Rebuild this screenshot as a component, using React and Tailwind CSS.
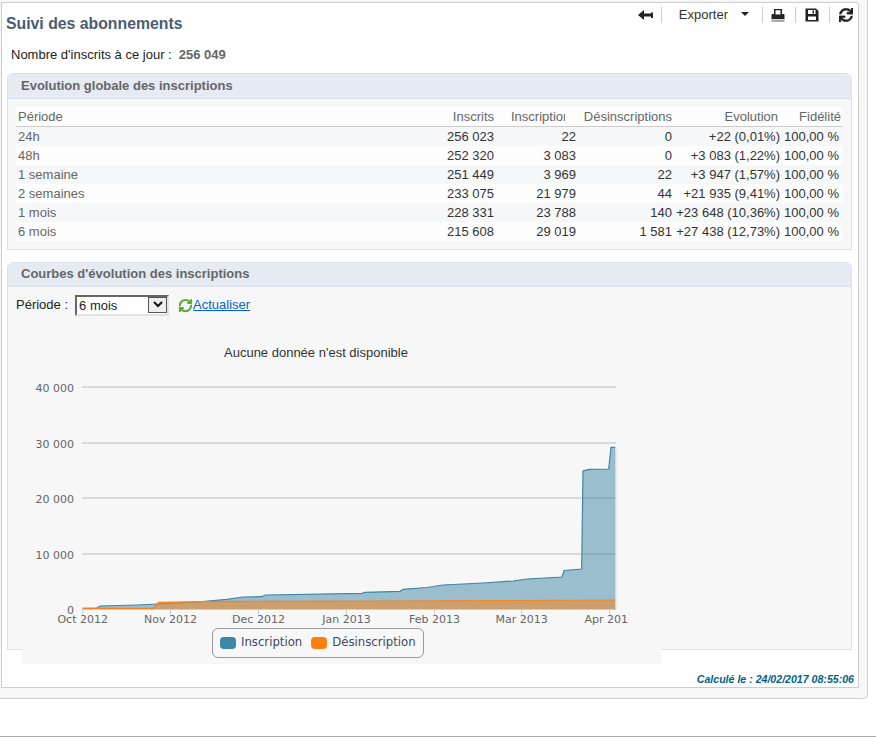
import React from "react";
import { FaSync } from "react-icons/fa";
import { RefreshCw } from "lucide-react";

const rows = [
  ["24h", "256 023", "22", "0", "+22 (0,01%)", "100,00 %"],
  ["48h", "252 320", "3 083", "0", "+3 083 (1,22%)", "100,00 %"],
  ["1 semaine", "251 449", "3 969", "22", "+3 947 (1,57%)", "100,00 %"],
  ["2 semaines", "233 075", "21 979", "44", "+21 935 (9,41%)", "100,00 %"],
  ["1 mois", "228 331", "23 788", "140", "+23 648 (10,36%)", "100,00 %"],
  ["6 mois", "215 608", "29 019", "1 581", "+27 438 (12,73%)", "100,00 %"],
];

const blue = [[82.7,608.3],[96.7,608.3],[100,606],[137,605],[158,604],[197,602],[227,599.3],[243,597],[262,596.7],[265,595],[362,593.3],[365,592.3],[400,591.3],[403,589.3],[427,587.5],[443,585],[483,583],[513,581],[527,579],[562,577],[564,570.5],[581.7,569],[583,471],[589,469.3],[608.7,469],[611,447.3],[615.3,447.3]];
const orange = [[82.7,608.3],[153,608.3],[156.7,605],[158.3,602.3],[200,601.7],[260,601.3],[400,601],[615.3,600]];
const pts = (a) => a.map((p) => p.join(",")).join(" ");
const area = (a) => `${a[0][0]},609 ${pts(a)} ${a[a.length - 1][0]},609`;

function Section({ title, className, headerClass, children }) {
  return (
    <section className={`ml-[5px] w-[845px] border border-[#d8e2ee] rounded-t-[6px] bg-[#f7f7f7] ${className}`}>
      <h2 className={`${headerClass} pl-[13px] flex items-center bg-[#e6eaf3] border-b border-[#d8e2ee] rounded-t-[6px] text-[13px] font-bold text-[#666]`}>
        {title}
      </h2>
      {children}
    </section>
  );
}

function Separator({ className }) {
  return <span className={`block w-px h-[16px] bg-[#ccc] ${className}`} />;
}

function Chart() {
  return (
    <div className="relative mt-[9px] ml-[6px] w-[639px] h-[340px] bg-[#f7f7f7]">
      <svg viewBox="22 324 639 340" width="639" height="340" className="block">
        {[387, 443, 498, 554].map((y) => (
          <line key={y} x1="82" x2="616" y1={y} y2={y} stroke="#cfcfcf" strokeWidth="1.5" />
        ))}
        <polygon points={area(blue)} fill="#3d85a4" fillOpacity="0.5" />
        <polyline points={pts(blue)} fill="none" stroke="#3d87a6" strokeWidth="1.2" />
        <polygon points={area(orange)} fill="#ff7f0e" fillOpacity="0.5" />
        <polyline points={pts(orange)} fill="none" stroke="#f58320" strokeWidth="1.2" />
        <line x1="82" x2="616" y1="609.5" y2="609.5" stroke="#c0d0e0" strokeWidth="1" />
        <line x1="615.8" x2="615.8" y1="447" y2="609" stroke="#c9d6e0" strokeWidth="1" />
        {[82.7, 170.5, 258.5, 346.5, 434.5, 521.6, 609.5].map((x) => (
          <line key={x} x1={x} x2={x} y1="609" y2="615" stroke="#c0d0e0" strokeWidth="1" />
        ))}
        <g style={{ fontFamily: '"DejaVu Sans", sans-serif', fontSize: "11px" }} fill="#666">
          {[["40 000", 392], ["30 000", 448], ["20 000", 503], ["10 000", 559], ["0", 614]].map(([t, y]) => (
            <text key={t} x="74" y={y} textAnchor="end">{t}</text>
          ))}
          {[["Oct 2012", 82.7], ["Nov 2012", 170.5], ["Dec 2012", 258.5], ["Jan 2013", 346.5], ["Feb 2013", 434.5], ["Mar 2013", 521.6]].map(([t, x]) => (
            <text key={t} x={x} y="623" textAnchor="middle">{t}</text>
          ))}
          <text x="584.5" y="623">Apr 201</text>
        </g>
        <text x="224" y="357" fill="#333" style={{ fontFamily: '"Liberation Sans", sans-serif', fontSize: "13px" }}>
          Aucune donnée n'est disponible
        </text>
      </svg>
      <div className="absolute left-[190px] top-[304px] w-[212px] h-[30px] border border-[#999] rounded-[6px] bg-[#f7f7f7] flex items-center pl-[7px] text-[11.7px] text-[#3e4a66] font-['DejaVu_Sans',sans-serif]">
        <span className="w-[16px] h-[12px] rounded-[4px] bg-[#3d87a6]" />
        <span className="ml-[5px]">Inscription</span>
        <span className="ml-[9px] w-[16px] h-[12px] rounded-[4px] bg-[#ff7f0e]" />
        <span className="ml-[5px]">Désinscription</span>
      </div>
    </div>
  );
}

export default function App() {
  return (
    <div className="w-[876px] h-[737px] bg-white flex flex-col font-['Liberation_Sans',Arial,sans-serif] text-[13px] text-[#333]">
      <div className="w-[868px] h-[699px] pt-[2px] pl-px bg-[#f8f8f8] border-r border-b border-[#ccc] rounded-br-[5px]">
        <div className="w-[858px] h-[686px] bg-white border border-[#ccc] rounded-tr-[3px] flex flex-col">
          <header className="h-[38px] flex justify-between shrink-0">
            <h1 className="pl-[4px] pt-[12px] text-[15.8px] leading-[18px] font-bold text-[#4a5d73]">Suivi des abonnements</h1>
            <div className="h-[24px] pr-[5px] flex items-center text-[#333]">
              <svg width="15" height="12" viewBox="0 0 15 12" fill="#222" className="mr-[8px]">
                <path d="M0 6 L6 1 V4.5 H13 V3.5 H15 V9 H13 V7.5 H6 V11 Z" />
              </svg>
              <Separator />
              <span className="ml-[17px] text-[13px]">Exporter</span>
              <span className="ml-[13px] w-0 h-0 border-x-[4px] border-x-transparent border-t-[4px] border-t-[#222] mb-[2px]" />
              <Separator className="ml-[13px]" />
              <svg width="14" height="15" viewBox="0 0 14 15" className="ml-[8px]">
                <path d="M3 1 H11 V6 H12.5 Q13.5 6 13.5 7 V11 H0.5 V7 Q0.5 6 1.5 6 H3 Z M4.5 2.2 V6.5 H9.5 V2.2 Z" fill="#222" fillRule="evenodd" />
                <rect x="0.5" y="11.5" width="13" height="2.5" fill="#aaa" />
              </svg>
              <Separator className="ml-[10px]" />
              <svg width="14" height="14" viewBox="0 0 14 14" className="ml-[9px]">
                <path d="M0.5 0.5 H11 L13.5 3 V13.5 H0.5 Z M3 2 V6 H10.5 V2 Z M3 8.5 V12 H11 V8.5 Z" fill="#222" fillRule="evenodd" />
                <rect x="7.5" y="2.5" width="1.5" height="3" fill="#222" />
              </svg>
              <Separator className="ml-[10px]" />
              <FaSync className="ml-[9px] text-[14px] text-[#222]" stroke="currentColor" strokeWidth={15} />
            </div>
          </header>
          <p className="h-[18px] mt-[4px] pl-[9px] pt-px leading-[18px] text-[13px] text-[#222] shrink-0">
            Nombre d'inscrits à ce jour :<span className="ml-[7px] font-bold text-[#666]">256 049</span>
          </p>
          <div className="h-[10px] shrink-0" />
          <Section title="Evolution globale des inscriptions" headerClass="h-[25px]" className="h-[177px] shrink-0">
            <div className="mt-[8px] mx-[8px]">
              <div className="h-[20px] flex items-center bg-[#fdfdfd] border-b border-[#ccc] text-[#666] whitespace-nowrap">
                <span className="w-[424px] pl-[2px]">Période</span>
                <span className="w-[54px] text-right">Inscrits</span>
                <span className="w-[71px] pl-[17px] overflow-hidden">Inscriptions</span>
                <span className="w-[107px] text-right">Désinscriptions</span>
                <span className="w-[106px] text-right">Evolution</span>
                <span className="w-[65px] pr-[2px] text-right">Fidélité</span>
              </div>
              {rows.map((r, i) => (
                <div key={r[0]} className={`h-[19px] flex items-center whitespace-nowrap ${i % 2 === 0 ? "bg-[#f5f7f9]" : "bg-[#fdfdfd]"}`}>
                  <span className="w-[424px] pl-[2px] text-[#666]">{r[0]}</span>
                  <span className="w-[54px] text-right">{r[1]}</span>
                  <span className="w-[82px] text-right">{r[2]}</span>
                  <span className="w-[96px] text-right">{r[3]}</span>
                  <span className="w-[108px] text-right">{r[4]}</span>
                  <span className="w-[63px] pr-[4px] text-right">{r[5]}</span>
                </div>
              ))}
            </div>
          </Section>
          <div className="h-[12px] shrink-0" />
          <Section title="Courbes d'évolution des inscriptions" headerClass="h-[24px] pb-[1px]" className="h-[388px] shrink-0">
            <div className="pt-[8px] pl-[8px]">
              <div className="h-[20px] flex items-center">
                <span className="text-[#222]">Période :</span>
                <span className="relative ml-[7px] w-[94px] h-[21px] block">
                  <select className="block w-full h-full appearance-none bg-white pl-[2px] pt-[1px] leading-[15px] border-2 border-t-[#666] border-l-[#666] border-r-[#e2e2e2] border-b-[#e2e2e2] text-[13px] text-[#222] rounded-none" defaultValue="6 mois">
                    <option>6 mois</option>
                  </select>
                  <span className="absolute right-[2px] top-[2px] w-[19px] h-[16px] bg-[#eee] border border-[#555] flex items-center justify-center pointer-events-none">
                    <svg width="10" height="7" viewBox="0 0 10 7"><path d="M1 1 L5 5 L9 1" fill="none" stroke="#111" strokeWidth="2" /></svg>
                  </span>
                </span>
                <RefreshCw className="ml-[9px] w-[15px] h-[15px] text-[#5aaa2e]" strokeWidth={3.2} />
                <a href="#" className="text-[#0066cc] underline mb-[1px]">Actualiser</a>
              </div>
              <Chart />
            </div>
          </Section>
          <div className="mt-auto h-[16px] pr-[4px] leading-[16px] text-right text-[10.6px] font-bold italic text-[#005f87]">
            Calculé le : 24/02/2017 08:55:06
          </div>
        </div>
      </div>
      <div className="mt-auto h-px bg-[#aaa]" />
    </div>
  );
}
